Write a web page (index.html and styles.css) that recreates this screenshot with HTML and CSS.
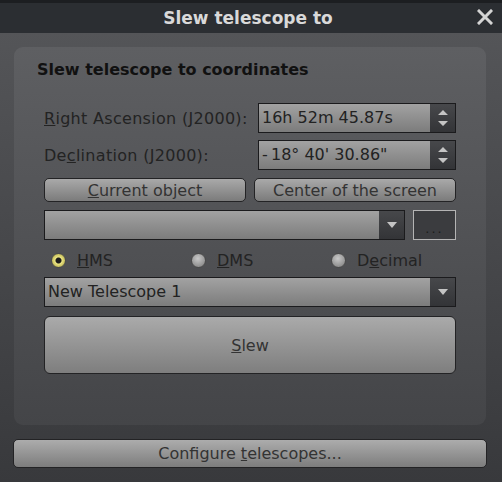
FILE: index.html
```html
<!DOCTYPE html>
<html>
<head>
    <title>Slew telescope to</title>
    <link rel="stylesheet" href="styles.css">
</head>
<body>
    <div class="window">
        <div class="titlebar">
            <span class="titlebar__title">Slew telescope to</span>
            <svg class="titlebar__close" width="16" height="16" viewBox="0 0 16 16">
                <path d="M2 2 L14 14 M14 2 L2 14" stroke="#d4d4d4" stroke-width="3" stroke-linecap="square" fill="none"/>
            </svg>
        </div>
        <div class="content">
            <div class="group">
                <div class="group__title">Slew telescope to coordinates</div>

                <div class="fieldRow fieldRow--ra">
                    <label><u>R</u>ight Ascension (J2000):</label>
                    <div class="spinbox">
                        <span class="spinbox__value">16h 52m 45.87s</span>
                        <span class="spinbox__arrows">
                            <svg width="12" height="22" viewBox="0 0 12 22">
                                <path d="M1 8 L6 3 L11 8 Z M1 14 L11 14 L6 19 Z" fill="#c4c4c4"/>
                            </svg>
                        </span>
                    </div>
                </div><!-- end ra -->

                <div class="fieldRow fieldRow--dec">
                    <label>De<u>c</u>lination (J2000):</label>
                    <div class="spinbox">
                        <span class="spinbox__value">-&#8201;18° 40' 30.86"</span>
                        <span class="spinbox__arrows">
                            <svg width="12" height="22" viewBox="0 0 12 22">
                                <path d="M1 8 L6 3 L11 8 Z M1 14 L11 14 L6 19 Z" fill="#c4c4c4"/>
                            </svg>
                        </span>
                    </div>
                </div><!-- end dec -->

                <div class="buttonRow">
                    <button class="btn"><u>C</u>urrent object</button>
                    <button class="btn">Center of the screen</button>
                </div>

                <div class="comboRow">
                    <div class="combo">
                        <span class="combo__value"></span>
                        <span class="combo__arrow">
                            <svg width="12" height="8" viewBox="0 0 12 8"><path d="M1 1 L11 1 L6 7 Z" fill="#c4c4c4"/></svg>
                        </span>
                    </div>
                    <button class="btn btn--dots">...</button>
                </div>

                <div class="radioRow">
                    <div class="radio radio--checked"><span class="radio__dot"></span><u>H</u>MS</div>
                    <div class="radio"><span class="radio__dot"></span><u>D</u>MS</div>
                    <div class="radio"><span class="radio__dot"></span>D<u>e</u>cimal</div>
                </div>

                <div class="combo combo--telescope">
                    <span class="combo__value">New Telescope 1</span>
                    <span class="combo__arrow">
                        <svg width="12" height="8" viewBox="0 0 12 8"><path d="M1 1 L11 1 L6 7 Z" fill="#c4c4c4"/></svg>
                    </span>
                </div>

                <button class="btn btn--slew"><u>S</u>lew</button>
            </div><!-- end group -->

            <button class="btn btn--configure">Configure <u>t</u>elescopes...</button>
        </div><!-- end content -->
    </div>
</body>
</html>
```

FILE: styles.css
```css
html, body {
    margin: 0;
    font-family: 'DejaVu Sans', sans-serif;
    font-size: 16px;
}

.window {
    width: 502px;
    height: 482px;
    display: flex;
    flex-direction: column;
    background: linear-gradient(#56575a, #38393c);
}

.titlebar {
    position: relative;
    box-sizing: border-box;
    height: 33px;
    display: flex;
    align-items: center;
    justify-content: center;
    border-top: 3px solid #1c1e21;
    background: #2b2e32;
}

.titlebar__title {
    font-size: 17px;
    font-weight: 700;
    color: #d9d9d9;
    margin-left: -6px;
}

.titlebar__close {
    position: absolute;
    right: 9px;
    top: 6px;
}

.content {
    flex: 1;
    display: flex;
    flex-direction: column;
    padding: 14px 15px 0 13px;
}

.group {
    box-sizing: border-box;
    height: 378px;
    margin: 0 1px;
    padding: 13px 30px 0;
    display: flex;
    flex-direction: column;
    border-radius: 9px;
    background: linear-gradient(#5e5f62, #444548);
}

.group__title {
    height: 20px;
    line-height: 20px;
    margin-left: -7px;
    font-weight: 700;
    color: #111;
}

.fieldRow {
    display: grid;
    grid-template-columns: 1fr 198px;
    align-items: center;
    height: 30px;
}

.fieldRow--ra {
    margin-top: 23px;
}

.fieldRow--dec {
    margin-top: 7px;
}

.fieldRow label {
    color: #232323;
    letter-spacing: 0.3px;
}

.spinbox,
.combo {
    box-sizing: border-box;
    height: 30px;
    display: flex;
    border: 1px solid #1b1b1d;
    background: linear-gradient(#a2a2a2, #7c7c7c);
}

.spinbox__value,
.combo__value {
    flex: 1;
    padding-left: 3px;
    line-height: 28px;
    color: #222;
}

.spinbox__arrows,
.combo__arrow {
    width: 25px;
    display: flex;
    align-items: center;
    justify-content: center;
    background: linear-gradient(#47484b, #333437);
}

.buttonRow {
    display: grid;
    grid-template-columns: 1fr 1fr;
    gap: 8px;
    margin-top: 8px;
}

.btn {
    box-sizing: border-box;
    height: 24px;
    padding: 0;
    font-family: 'DejaVu Sans', sans-serif;
    font-size: 16px;
    color: #333;
    border: 1px solid #232325;
    border-radius: 5px;
    background: linear-gradient(#a9a9a9, #7b7b7b);
}

.comboRow {
    display: grid;
    grid-template-columns: 1fr 43px;
    gap: 8px;
    margin-top: 8px;
}

.btn--dots {
    height: 30px;
    border: 1px solid #b4b4b4;
    border-radius: 0;
    background: #3b3c3f;
    color: #1c1c1c;
    font-size: 13px;
    padding-top: 6px;
    letter-spacing: 2px;
}

.radioRow {
    display: grid;
    grid-template-columns: 140px 140px 1fr;
    height: 20px;
    margin-top: 10px;
}

.radio {
    display: flex;
    align-items: center;
    padding-left: 7px;
    color: #232323;
}

.radio__dot {
    box-sizing: border-box;
    width: 15px;
    height: 15px;
    margin-right: 11px;
    border-radius: 50%;
    border: 1px solid #4a4a4a;
    background: radial-gradient(circle at 45% 35%, #c8c8c8, #8a8a8a 80%);
}

.radio--checked .radio__dot {
    background: radial-gradient(circle, #1c1c1c 0 2.5px, #ebe482 3.5px, #bdb655 7px);
}

.combo--telescope {
    margin-top: 7px;
}

.btn--slew {
    height: 58px;
    margin-top: 9px;
    border-radius: 6px;
    background: linear-gradient(#aaaaaa, #7e7e7e);
}

.btn--configure {
    height: 29px;
    margin-top: 14px;
    border-radius: 5px;
    background: linear-gradient(#acacac, #7d7d7d);
}
```
